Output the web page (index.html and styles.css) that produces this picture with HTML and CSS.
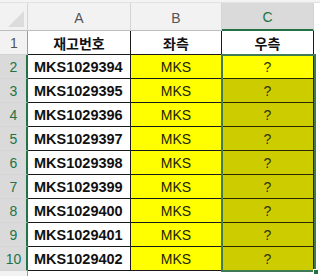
FILE: index.html
```html
<!DOCTYPE html>
<html lang="ko">
<head>
<meta charset="utf-8">
<link rel="stylesheet" href="styles.css">
</head>
<body>
<div class="wrap">
  <div class="topband"></div>
  <div class="sheet">
    <div class="corner"><span class="tri"></span></div>
    <div class="colhead">A</div>
    <div class="colhead">B</div>
    <div class="colhead sel">C</div>
    <div class="colhead rest"></div>

    <div class="rowhead">1</div>
    <div class="cell title">재고번호</div>
    <div class="cell title">좌측</div>
    <div class="cell title">우측</div>
    <div class="cell blank"></div>

    <div class="rowhead sel">2</div>
    <div class="cell id">MKS1029394</div>
    <div class="cell mid">MKS</div>
    <div class="cell q active">?</div>
    <div class="cell blank"></div>

    <div class="rowhead sel">3</div>
    <div class="cell id">MKS1029395</div>
    <div class="cell mid">MKS</div>
    <div class="cell q">?</div>
    <div class="cell blank"></div>

    <div class="rowhead sel">4</div>
    <div class="cell id">MKS1029396</div>
    <div class="cell mid">MKS</div>
    <div class="cell q">?</div>
    <div class="cell blank"></div>

    <div class="rowhead sel">5</div>
    <div class="cell id">MKS1029397</div>
    <div class="cell mid">MKS</div>
    <div class="cell q">?</div>
    <div class="cell blank"></div>

    <div class="rowhead sel">6</div>
    <div class="cell id">MKS1029398</div>
    <div class="cell mid">MKS</div>
    <div class="cell q">?</div>
    <div class="cell blank"></div>

    <div class="rowhead sel">7</div>
    <div class="cell id">MKS1029399</div>
    <div class="cell mid">MKS</div>
    <div class="cell q">?</div>
    <div class="cell blank"></div>

    <div class="rowhead sel">8</div>
    <div class="cell id">MKS1029400</div>
    <div class="cell mid">MKS</div>
    <div class="cell q">?</div>
    <div class="cell blank"></div>

    <div class="rowhead sel">9</div>
    <div class="cell id">MKS1029401</div>
    <div class="cell mid">MKS</div>
    <div class="cell q">?</div>
    <div class="cell blank"></div>

    <div class="rowhead sel">10</div>
    <div class="cell id">MKS1029402</div>
    <div class="cell mid">MKS</div>
    <div class="cell q">?</div>
    <div class="cell blank"></div>

    <div class="rowhead foot"></div>
    <div class="cell blank foot"></div>
    <div class="cell blank foot"></div>
    <div class="cell blank foot"></div>
    <div class="cell blank foot"></div>
  </div>
  <div class="selection"><span class="handle"></span></div>
</div>
</body>
</html>
```
FILE: styles.css
```css
* { box-sizing: border-box; }
html, body { margin: 0; padding: 0; background: #ffffff; }
body {
  width: 320px;
  height: 276px;
  overflow: hidden;
  font-family: "Liberation Sans", "Noto Sans CJK KR", sans-serif;
}
.wrap { position: relative; width: 320px; height: 276px; }
.topband {
  height: 3px;
  background: #f3f3f3;
  border-bottom: 1px solid #e2e2e2;
}
.sheet {
  display: grid;
  grid-template-columns: 28px 103px 91px 92px 6px;
  grid-template-rows: 28px repeat(10, 24px) 5px;
}
.corner {
  position: relative;
  background: #f2f2f2;
  border-right: 1px solid #d4d4d4;
  border-bottom: 1px solid #bdbdbd;
}
.tri {
  position: absolute;
  right: 3px;
  bottom: 3px;
  width: 0;
  height: 0;
  border-left: 16px solid transparent;
  border-bottom: 16px solid #dcdcdc;
}
.colhead {
  display: flex;
  align-items: center;
  justify-content: center;
  background: #f2f2f2;
  color: #555555;
  font-size: 14px;
  border-right: 1px solid #d4d4d4;
  border-bottom: 1px solid #bdbdbd;
  padding-top: 2px;
}
.colhead.sel {
  background: #dadada;
  color: #217346;
  border-bottom: 2px solid #217346;
}
.colhead.rest { background: #ffffff; border-right: none; border-bottom: none; }
.rowhead {
  display: flex;
  align-items: center;
  justify-content: center;
  background: #f2f2f2;
  color: #555555;
  font-size: 14px;
  border-bottom: 1px solid #d4d4d4;
  border-right: 1px solid #9b9b9b;
  padding-left: 1px;
}
.rowhead.sel {
  background: #dadada;
  color: #217346;
  border-right: 2px solid #217346;
}
.rowhead.foot { background: #f2f2f2; border-bottom: none; }
.cell {
  display: flex;
  align-items: center;
  border-right: 1px solid #1a1a1a;
  border-bottom: 1px solid #1a1a1a;
  font-size: 14px;
  color: #111111;
  white-space: nowrap;
}
.cell.title {
  justify-content: center;
  font-family: "Noto Sans CJK KR", sans-serif;
  font-weight: bold;
  font-size: 14px;
  background: #ffffff;
}
.cell.id {
  padding-left: 6px;
  font-weight: bold;
  font-size: 14.5px;
  background: #ffffff;
}
.cell.mid {
  justify-content: center;
  background: #ffff00;
  color: #222200;
}
.cell.q {
  justify-content: center;
  background: #cccc00;
  color: #333300;
  border-bottom-color: #2a2a00;
  border-right-color: #2a2a00;
}
.cell.q.active { background: #ffff00; }
.cell.blank { background: #ffffff; border-right: none; border-bottom: none; }
.cell.foot { border: none; }
.selection {
  position: absolute;
  left: 221px;
  top: 54px;
  width: 95px;
  height: 218px;
  border: 2px solid #3f7a55;
  pointer-events: none;
}
.handle {
  position: absolute;
  right: -5px;
  bottom: -5px;
  width: 6px;
  height: 6px;
  background: #217346;
  border: 1px solid #ffffff;
}
```
